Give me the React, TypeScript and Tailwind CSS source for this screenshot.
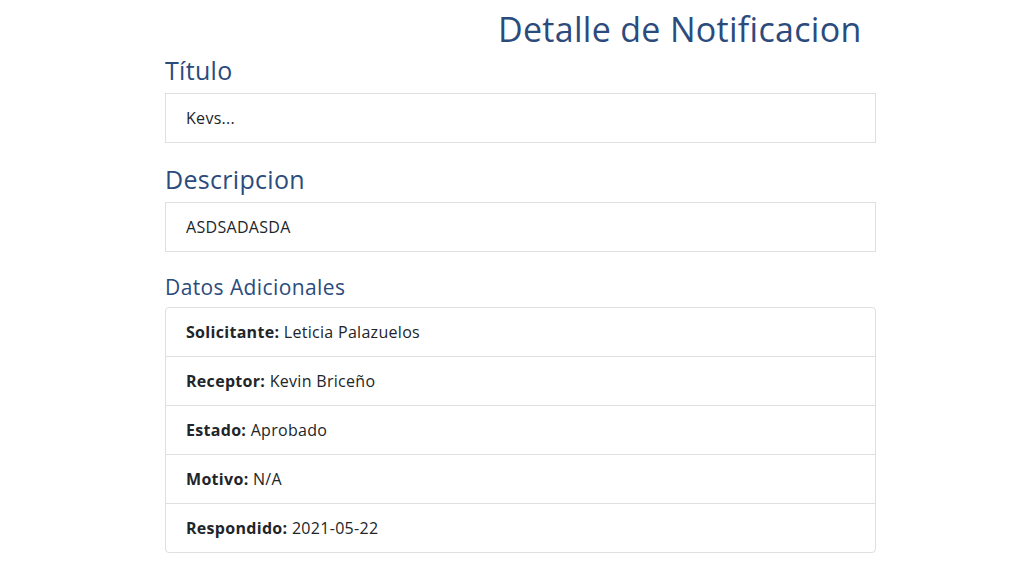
const datos = [
  { label: "Solicitante:", value: "Leticia Palazuelos" },
  { label: "Receptor:", value: "Kevin Briceño" },
  { label: "Estado:", value: "Aprobado" },
  { label: "Motivo:", value: "N/A" },
  { label: "Respondido:", value: "2021-05-22" },
]

export default function App() {
  return (
    <main className="min-h-screen bg-white text-[#212529]" style={{ fontFamily: "'Open Sans', 'Noto Sans', sans-serif" }}>
      <div className="w-[711px] ml-[165px] pt-[9px]">
        <h1 className="text-[34px] leading-[40px] tracking-[0.3px] font-medium text-[#2c4b7d] ml-[333px] whitespace-nowrap">
          Detalle de Notificacion
        </h1>

        {/* Titulo */}
        <h2 className="mt-[6px] mb-2 text-[25px] leading-[30px] tracking-[0.3px] font-medium text-[#2c4b7d]">Título</h2>
        <div className="border border-[#dfdfdf] px-5 py-3 text-[16px] leading-6 tracking-[0.3px]">Kevs...</div>

        {/* Descripcion */}
        <h2 className="mt-[21px] mb-2 text-[25px] leading-[30px] tracking-[0.3px] font-medium text-[#2c4b7d]">Descripcion</h2>
        <div className="border border-[#dfdfdf] px-5 py-3 text-[16px] leading-6 tracking-[0.3px]">ASDSADASDA</div>

        {/* Datos adicionales */}
        <h3 className="mt-[23px] mb-2 text-[21px] leading-6 tracking-[0.4px] font-medium text-[#2c4b7d]">Datos Adicionales</h3>
        <div className="border border-[#dfdfdf] rounded divide-y divide-[#dfdfdf]">
          {datos.map((d) => (
            <div key={d.label} className="px-5 py-3 text-[16px] leading-6 tracking-[0.3px]">
              <span className="font-bold">{d.label}</span> {d.value}
            </div>
          ))}
        </div>
      </div>
    </main>
  )
}
